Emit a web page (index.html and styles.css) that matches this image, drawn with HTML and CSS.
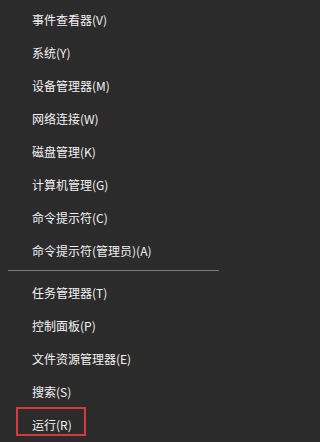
FILE: index.html
```html
<!DOCTYPE html>
<html lang="zh-CN">
<head>
<meta charset="utf-8">
<title>Win+X 菜单</title>
<link rel="stylesheet" href="styles.css">
</head>
<body>
<ul class="menu">
  <li class="item">事件查看器(V)</li>
  <li class="item">系统(Y)</li>
  <li class="item">设备管理器(M)</li>
  <li class="item">网络连接(W)</li>
  <li class="item">磁盘管理(K)</li>
  <li class="item">计算机管理(G)</li>
  <li class="item">命令提示符(C)</li>
  <li class="item">命令提示符(管理员)(A)</li>
  <li class="separator" role="separator"></li>
  <li class="item">任务管理器(T)</li>
  <li class="item">控制面板(P)</li>
  <li class="item">文件资源管理器(E)</li>
  <li class="item">搜索(S)</li>
  <li class="item item-marked">运行(R)<span class="mark"></span></li>
</ul>
</body>
</html>
```
FILE: styles.css
```css
html, body {
  margin: 0;
  padding: 0;
  background: #2b2b2b;
}
body {
  width: 228px;
  height: 442px;
  overflow: hidden;
  font-family: "Noto Sans CJK SC", "Microsoft YaHei", sans-serif;
  font-size: 12px;
  color: #f2f2f2;
}
.menu {
  list-style: none;
  margin: 0;
  padding: 3px 0 0 0;
}
.item {
  height: 33px;
  line-height: 33px;
  padding-left: 32px;
  white-space: nowrap;
}
.separator {
  height: 1px;
  margin: 3px 9px 5px 8px;
  background: #7a7a7a;
}
.item-marked {
  position: relative;
}
.mark {
  position: absolute;
  left: 16px;
  top: -1px;
  width: 70px;
  height: 29px;
  box-sizing: border-box;
  border: 2px solid #d8393e;
}
```
